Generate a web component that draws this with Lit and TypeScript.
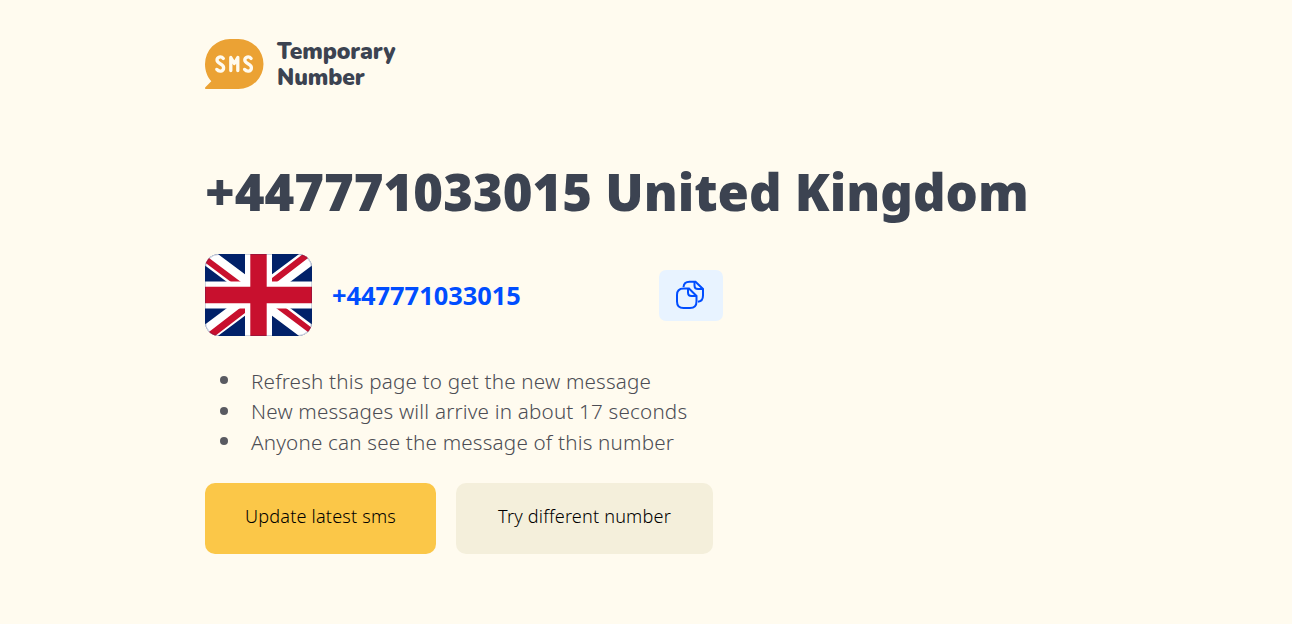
import { LitElement, html, css, svg } from 'lit';
import { customElement, state } from 'lit/decorators.js';

const logo = svg`
  <path d="M25 0h8.500a25 25 0 0 1 0 50H1.200c-1.400 0-1.500-1.100-.6-1.900l5.700-5.900C2.300 37.800 0 32 0 25A25 25 0 0 1 25 0z" fill="#eba234" />
  <g fill="none" stroke="#fffbef" stroke-width="3.300" stroke-linecap="round" stroke-linejoin="round">
    <path d="M18.300 19.500c-2.200-2.800-6.300-1.500-6.300 1.600 0 4.100 6.600 3.200 6.600 7.600 0 4-4.700 4.300-6.800 1.700" />
    <path d="M25.800 31.500V18.500l3.500 6L32.800 18.500v13" />
    <path d="M46.100 19.500c-2.200-2.800-6.300-1.500-6.300 1.600 0 4.100 6.600 3.200 6.600 7.600 0 4-4.700 4.300-6.800 1.700" />
  </g>
`;

@customElement('app-root')
export class AppRoot extends LitElement {
  @state() private number = '+447771033015';
  @state() private country = 'United Kingdom';

  static styles = css`
    :host {
      display: block;
      box-sizing: border-box;
      min-height: 624px;
      padding: 39px 205px 0;
      background: #fffbef;
      color: #3c4351;
      font-family: 'Noto Sans', sans-serif;
    }
    svg {
      display: block;
      flex: none;
    }
    .brand {
      display: flex;
      gap: 13px;
      height: 50px;
    }
    .name {
      font: 870 22.800px/26px 'Nunito', 'Noto Sans', sans-serif;
      letter-spacing: -0.12px;
    }
    h1 {
      margin: 68px 0 0;
      font-size: 50.800px;
      line-height: 70px;
      font-weight: 900;
      white-space: nowrap;
    }
    .number {
      display: flex;
      align-items: center;
      width: 518px;
      height: 82px;
      margin-top: 27px;
    }
    .phone {
      flex: 1;
      margin-left: 20px;
      color: #004dff;
      font-size: 25.400px;
      font-weight: 700;
    }
    button {
      border: 0;
      padding: 0;
      font: inherit;
      cursor: pointer;
    }
    .copy {
      display: flex;
      align-items: center;
      justify-content: center;
      width: 64px;
      height: 51px;
      border-radius: 7px;
      background: #e8f3ff;
    }
    ul {
      margin: 30px 0 0;
      padding: 0;
      list-style: none;
      color: #4c4d54;
      font-size: 20.650px;
      font-weight: 300;
      letter-spacing: 0.180px;
      line-height: 30.400px;
    }
    li {
      display: flex;
      align-items: center;
    }
    li::before {
      content: '';
      width: 8px;
      height: 8px;
      margin: 0 23px 2px 15px;
      border-radius: 50%;
      background: #595a61;
    }
    .actions {
      display: flex;
      gap: 20px;
      margin-top: 26px;
    }
    .action {
      width: 231px;
      height: 71px;
      padding-bottom: 5px;
      border-radius: 10px;
      background: #fbc748;
      color: #000;
      font-size: 18.100px;
      font-weight: 300;
      letter-spacing: 0.180px;
    }
    .secondary {
      width: 257px;
      background: #f4efdb;
    }
  `;

  private copy() {
    navigator.clipboard?.writeText(this.number);
  }

  render() {
    return html`
      <header class="brand">
        <svg width="59" height="50" viewBox="0 0 59 50" aria-hidden="true">${logo}</svg>
        <div class="name">Temporary<br />Number</div>
      </header>
      <h1>${this.number} ${this.country}</h1>
      <div class="number">
        <svg width="107" height="82" viewBox="0 0 107 82" aria-hidden="true">
          <clipPath id="flag"><rect width="107" height="82" rx="14" /></clipPath>
          <g clip-path="url(#flag)">
            <path d="M0 0h107v82H0z" fill="#012169" />
            <path d="M0 1l107 80M107 1L0 81" stroke="#fff" stroke-width="17" />
            <path
              d="M0 1l36 27H26L0 8.500zM67 28v-4L98 0h9v1L72 28zM40 54v5L10 82H0v-1l35-27zM71 54h10l26 20v7z"
              fill="#c8102e"
            />
            <path d="M53.500 0v82M0 41h107" stroke="#fff" stroke-width="27" />
            <path d="M53.500 0v82M0 41h107" stroke="#c8102e" stroke-width="16.400" />
          </g>
          <rect x=".5" y=".5" width="106" height="81" rx="13.500" fill="none" stroke="#012169" stroke-opacity=".2" />
        </svg>
        <span class="phone">${this.number}</span>
        <button class="copy" aria-label="Copy number" @click=${this.copy}>
          <svg width="30" height="30" viewBox="0 0 30 30" fill="none" stroke="#004dff" stroke-width="2">
            <path d="M7.500 7C7.800 3.500 9.800 1.700 13.500 1.700H19.500l7.500 7.300v6.500c0 3.800-1.600 5.900-5 6.300" />
            <path d="M18.500 1.700v3.800c0 2.500 1 3.500 3.500 3.500h5" />
            <path d="M13 8.500H7.500C3.200 8.500 1 10.700 1 15v6.500C1 25.800 3.200 28 7.500 28H14c4.300 0 6.500-2.200 6.500-6.500V16z" />
            <path d="M12 8.500v4c0 2.500 1 3.500 3.500 3.500h5" />
          </svg>
        </button>
      </div>
      <ul>
        <li>Refresh this page to get the new message</li>
        <li>New messages will arrive in about 17 seconds</li>
        <li>Anyone can see the message of this number</li>
      </ul>
      <div class="actions">
        <button class="action">Update latest sms</button>
        <button class="action secondary">Try different number</button>
      </div>
    `;
  }
}

declare global {
  interface HTMLElementTagNameMap {
    'app-root': AppRoot;
  }
}
